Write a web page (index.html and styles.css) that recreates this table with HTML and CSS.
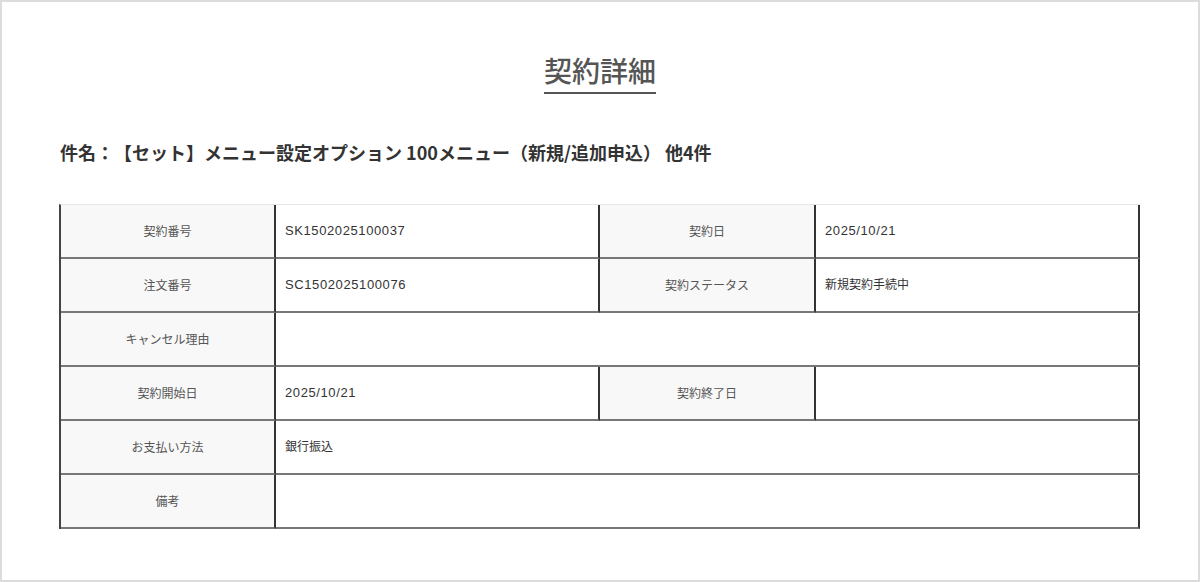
FILE: index.html
```html
<!DOCTYPE html>
<html lang="ja">
<head>
<meta charset="utf-8">
<title>契約詳細</title>
<link rel="stylesheet" href="styles.css">
</head>
<body>
<div class="page">
  <div class="title-wrap">
    <h1 class="title">契約詳細</h1>
  </div>
  <p class="subject">件名：【セット】メニュー設定オプション 100メニュー（新規/追加申込） 他4件</p>
  <table class="detail">
    <colgroup>
      <col class="c-label1">
      <col class="c-value">
      <col class="c-label2">
      <col class="c-value">
    </colgroup>
    <tbody>
      <tr>
        <th>契約番号</th>
        <td class="latin">SK1502025100037</td>
        <th>契約日</th>
        <td class="latin">2025/10/21</td>
      </tr>
      <tr>
        <th>注文番号</th>
        <td class="latin">SC1502025100076</td>
        <th>契約ステータス</th>
        <td>新規契約手続中</td>
      </tr>
      <tr>
        <th>キャンセル理由</th>
        <td colspan="3"></td>
      </tr>
      <tr>
        <th>契約開始日</th>
        <td class="latin">2025/10/21</td>
        <th>契約終了日</th>
        <td></td>
      </tr>
      <tr>
        <th>お支払い方法</th>
        <td colspan="3">銀行振込</td>
      </tr>
      <tr>
        <th>備考</th>
        <td colspan="3"></td>
      </tr>
    </tbody>
  </table>
</div>
</body>
</html>
```

FILE: styles.css
```css
* {
  box-sizing: border-box;
}

html, body {
  margin: 0;
  padding: 0;
  background: #fff;
}

body {
  font-family: "Liberation Sans", "Noto Sans CJK JP", sans-serif;
  color: #333;
  text-spacing-trim: space-all;
}

.page {
  width: 1200px;
  height: 582px;
  border: 2px solid #dcdcdc;
  padding: 50px 57px 0 57px;
}

.title-wrap {
  text-align: center;
}

.title {
  display: inline-block;
  margin: 0;
  font-family: "Noto Sans CJK JP", sans-serif;
  font-size: 28px;
  font-weight: 500;
  line-height: 36px;
  color: #555;
  padding-bottom: 4px;
  border-bottom: 2px solid #555;
}

.subject {
  margin: 46px 0 0 1px;
  font-family: "Noto Sans CJK JP", sans-serif;
  font-size: 18px;
  font-weight: 700;
  line-height: 24px;
  color: #333;
  text-spacing-trim: space-all;
}

.detail {
  margin-top: 40px;
  table-layout: fixed;
  border-collapse: separate;
  border-spacing: 0;
  width: 1081px;
  border-top: 1px solid #e6e6e6;
  border-left: 2px solid #444;
}

.c-label1 {
  width: 215px;
}

.c-label2 {
  width: 216px;
}

.c-value {
  width: 324px;
}

.detail th,
.detail td {
  height: 54px;
  font-size: 12px;
  line-height: 16px;
  border-right: 2px solid #333;
  border-bottom: 2px solid #777;
  padding: 0 9px;
  vertical-align: middle;
}

.detail th {
  background: #f8f8f8;
  color: #555;
  font-weight: 400;
  text-align: center;
  font-family: "Noto Sans CJK JP", sans-serif;
}

.detail td {
  background: #fff;
  color: #333;
  text-align: left;
}

.detail td.latin {
  font-size: 13px;
  letter-spacing: 0.6px;
}
```
